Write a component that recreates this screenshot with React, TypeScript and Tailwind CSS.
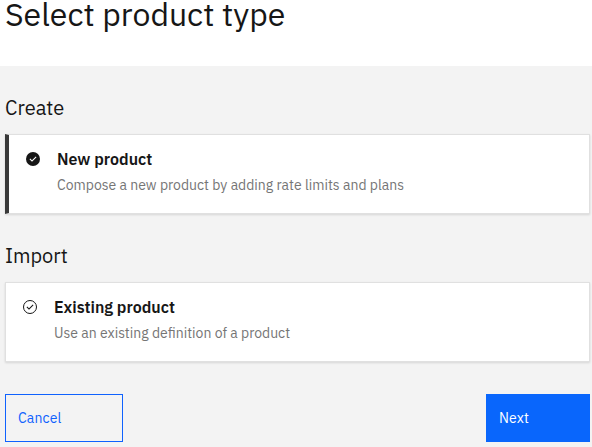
const cardShadow = "shadow-[0_1px_2px_rgba(0,0,0,0.12)]";

function CheckIcon({ filled }: { filled: boolean }) {
  return (
    <svg className="mt-[17px] size-[14px] shrink-0" viewBox="2 2 28 28" fill="none">
      {filled ? (
        <circle cx="16" cy="16" r="14" fill="#161616" />
      ) : (
        <circle cx="16" cy="16" r="13" stroke="#161616" strokeWidth="2" />
      )}
      <path d="M14 21.414 9 16.413 10.413 15 14 18.586 21.585 11 23 12.415Z" fill={filled ? "white" : "#161616"} />
    </svg>
  );
}

function ProductCard({ title, description, selected = false }: { title: string; description: string; selected?: boolean }) {
  return (
    <section className={`flex h-[80px] border border-[#e0e0e0] bg-white pl-[17px] ${cardShadow} ${selected ? "border-l-4 border-l-[#393939]" : ""}`}>
      <CheckIcon filled={selected} />
      <div className="ml-[17px] pt-[12px]">
        <h3 className="text-base font-semibold leading-6">{title}</h3>
        <p className="mt-[2px] text-sm leading-6 text-[#757575]">{description}</p>
      </div>
    </section>
  );
}

export default function App() {
  return (
    <div className="h-[447px] w-[592px] bg-[#f3f3f3] font-['IBM_Plex_Sans','Noto_Sans',sans-serif] text-[#161616]">
      <header className="h-[66px] bg-white pl-[5px]">
        <h1 className="whitespace-nowrap text-[32px] leading-[28px]">Select product type</h1>
      </header>
      <main className="pl-[5px] pr-[2px] pt-[28px]">
        <h2 className="h-[40px] text-xl leading-7">Create</h2>
        <ProductCard title="New product" description="Compose a new product by adding rate limits and plans" selected />
        <h2 className="mt-[28px] h-[40px] text-xl leading-7">Import</h2>
        <ProductCard title="Existing product" description="Use an existing definition of a product" />
        <div className="mt-8 flex justify-between text-sm">
          <button className="h-12 w-[118px] border border-[#0f62fe] pl-3 text-left tracking-[0.16px] text-[#0f62fe]">Cancel</button>
          <button className="h-12 w-[104px] bg-[#0966fc] pl-[13px] text-left tracking-[0.16px] text-white">Next</button>
        </div>
      </main>
    </div>
  );
}
